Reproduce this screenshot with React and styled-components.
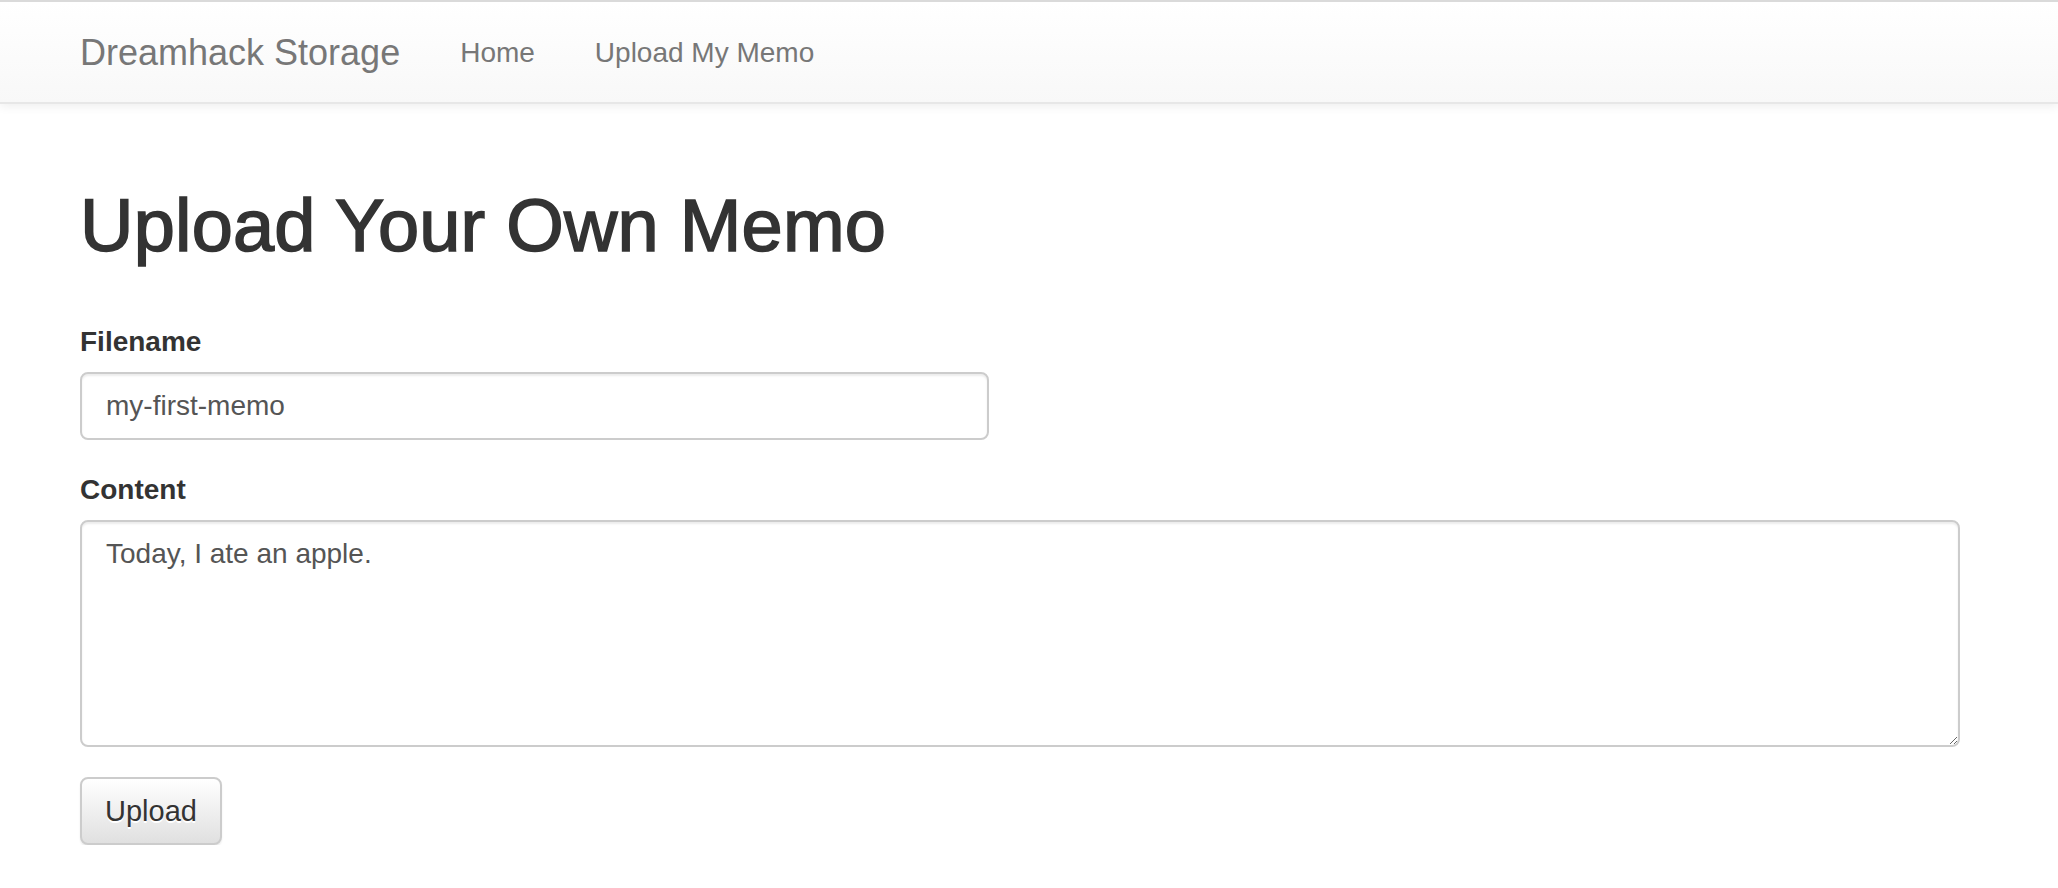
import React from 'react';
import styled, { createGlobalStyle } from 'styled-components';

const GlobalStyle = createGlobalStyle`
  html, body {
    margin: 0;
    padding: 0;
    background: #fff;
  }
  body {
    font-family: "Liberation Sans", Arial, sans-serif;
    font-size: 28px;
    line-height: 40px;
    color: #333;
  }
  * {
    box-sizing: border-box;
  }
`;

const App = () => {
  return (
    <>
      <GlobalStyle />
      <Navbar>
        <Container>
          <NavRow>
            <Brand href="#">Dreamhack Storage</Brand>
            <NavList>
              <NavItem>
                <NavLink href="#">Home</NavLink>
              </NavItem>
              <NavItem>
                <NavLink href="#">Upload My Memo</NavLink>
              </NavItem>
            </NavList>
          </NavRow>
        </Container>
      </Navbar>
      <Container>
        <Title>Upload Your Own Memo</Title>
        <Form onSubmit={(e) => e.preventDefault()}>
          <FormGroup>
            <Label htmlFor="filename">Filename</Label>
            <TextInput id="filename" type="text" defaultValue="my-first-memo" />
          </FormGroup>
          <FormGroup>
            <Label htmlFor="content">Content</Label>
            <TextArea id="content" defaultValue="Today, I ate an apple." />
          </FormGroup>
          <UploadButton type="submit">Upload</UploadButton>
        </Form>
      </Container>
    </>
  );
};

export default App;

const Navbar = styled.nav`
  min-height: 104px;
  border-top: 2px solid #dadada;
  border-bottom: 2px solid #e7e7e7;
  background-image: linear-gradient(to bottom, #fff 0, #f8f8f8 100%);
  box-shadow: inset 0 2px 0 rgba(255, 255, 255, 0.15), 0 2px 10px rgba(0, 0, 0, 0.075);
`;

const Container = styled.div`
  width: 1940px;
  margin-left: 50px;
  padding: 0 30px;
`;

const NavRow = styled.div`
  display: flex;
  align-items: flex-start;
`;

const Brand = styled.a`
  display: block;
  height: 100px;
  margin-left: -30px;
  padding: 31px 30px 29px;
  font-size: 36px;
  line-height: 40px;
  color: #777;
  text-decoration: none;
`;

const NavList = styled.ul`
  display: flex;
  list-style: none;
  margin: 0;
  padding: 0;
`;

const NavItem = styled.li`
  display: block;
`;

const NavLink = styled.a`
  display: block;
  padding: 31px 30px 29px;
  font-size: 28px;
  line-height: 40px;
  color: #777;
  text-decoration: none;
`;

const Title = styled.h1`
  margin: 81px 0 56px;
  font-size: 74px;
  line-height: 81px;
  font-weight: 500;
  color: #333;
  letter-spacing: 0.2px;
  -webkit-text-stroke: 1.6px #333;
`;

const Form = styled.form`
  display: flex;
  flex-direction: column;
  align-items: flex-start;
`;

const FormGroup = styled.div`
  display: flex;
  flex-direction: column;
  align-items: flex-start;
  width: 100%;
  margin-bottom: 30px;
`;

const Label = styled.label`
  display: block;
  margin-bottom: 10px;
  font-size: 28px;
  line-height: 40px;
  font-weight: 700;
  color: #333;
`;

const fieldStyles = `
  display: block;
  padding: 12px 24px;
  font-family: "Liberation Sans", Arial, sans-serif;
  font-size: 28px;
  line-height: 40px;
  color: #555;
  background-color: #fff;
  border: 2px solid #ccc;
  border-radius: 8px;
  box-shadow: inset 0 2px 2px rgba(0, 0, 0, 0.075);
  outline: none;
`;

const TextInput = styled.input`
  ${fieldStyles}
  width: 909px;
  height: 68px;
`;

const TextArea = styled.textarea`
  ${fieldStyles}
  width: 100%;
  height: 227px;
  resize: vertical;
`;

const UploadButton = styled.button`
  display: inline-block;
  width: 142px;
  height: 68px;
  padding: 12px 0;
  font-family: "Liberation Sans", Arial, sans-serif;
  font-size: 29px;
  line-height: 40px;
  color: #333;
  text-shadow: 0 2px 0 #fff;
  background-image: linear-gradient(to bottom, #fff 0, #e0e0e0 100%);
  border: 2px solid #ccc;
  border-radius: 8px;
  box-shadow: inset 0 2px 0 rgba(255, 255, 255, 0.15), 0 2px 2px rgba(0, 0, 0, 0.075);
  cursor: pointer;
`;
